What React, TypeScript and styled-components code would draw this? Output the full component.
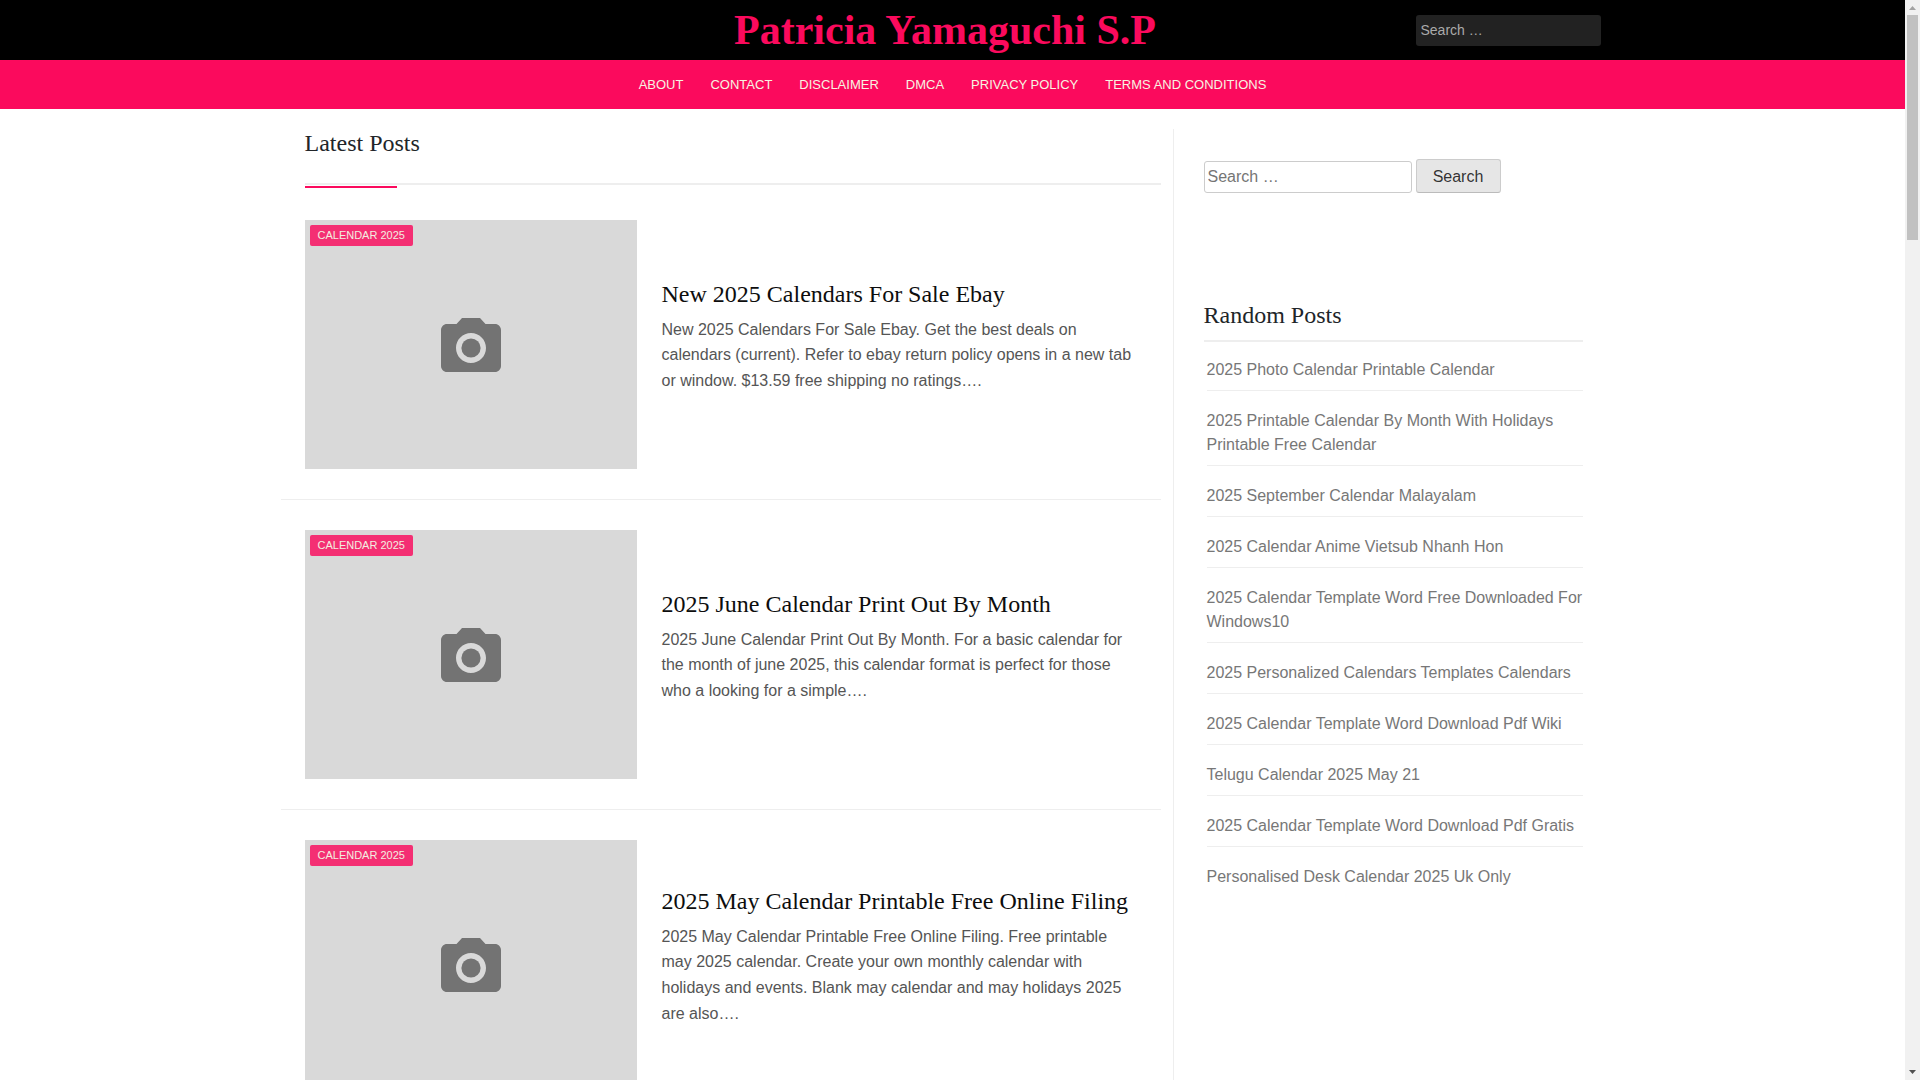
import React from "react";
import styled, { createGlobalStyle } from "styled-components";

const pink = "#fb0a5d";
const ivory = "#f8f3e1";
const rule = "#eeeeee";
const sans = '"Liberation Sans", Arial, Helvetica, sans-serif';
const serif = '"Liberation Serif", "Times New Roman", Times, serif';

const GlobalStyle = createGlobalStyle`
  *, *::before, *::after { box-sizing: border-box; }
  body {
    margin: 0;
    background: #fff;
    color: #212529;
    font: 16px/1.5 ${sans};
  }
  a { color: inherit; text-decoration: none; }
  h1, h2, h3, p, ul { margin: 0; padding: 0; font-weight: 400; }
  ul { list-style: none; }
`;

const Viewport = styled.div`
  display: flex;
  height: 100vh;
`;

const Page = styled.div`
  flex: 1;
  min-width: 0;
  overflow-y: auto;
  scrollbar-width: none;
`;

const Container = styled.div`
  max-width: 1344px;
  margin: 0 auto;
`;

const Header = styled.header`
  background: #000;
`;

const HeaderInner = styled(Container)`
  display: grid;
  grid-template-columns: 170px 1fr 185px;
  align-items: center;
  min-height: 60px;
  padding: 0 24px;
`;

const SiteTitle = styled.h1`
  grid-column: 2;
  color: ${pink};
  font: 700 42px/60px ${serif};
  text-align: center;
`;

const HeaderSearch = styled.input`
  width: 100%;
  height: 31px;
  padding: 0 5px;
  border: 0;
  border-radius: 3px;
  background: #222;
  color: #aaa;
  font: 14px ${sans};
  &::placeholder { color: #aaa; opacity: 1; }
`;

const Nav = styled.nav`
  background: ${pink};
`;

const NavList = styled.ul`
  display: flex;
  justify-content: center;
  gap: 27px;
`;

const NavLink = styled.a`
  display: block;
  color: ${ivory};
  font-size: 13px;
  line-height: 49px;
  text-transform: uppercase;
`;

const Content = styled(Container)`
  display: grid;
  grid-template-columns: minmax(0, 880fr) minmax(0, 452fr);
  gap: 12px;
  padding-top: 20px;
`;

const SectionTitle = styled.h2`
  position: relative;
  margin: 0 0 5px 24px;
  padding-bottom: 25px;
  border-bottom: 2px solid ${rule};
  font: 24px/29px ${serif};
  &::after {
    content: "";
    position: absolute;
    left: 0;
    bottom: -5px;
    width: 92px;
    height: 2px;
    background: ${pink};
  }
`;

const Post = styled.article`
  display: flex;
  align-items: center;
  gap: 25px;
  padding: 30px 24px;
  border-bottom: 1px solid ${rule};
`;

const Thumb = styled.div`
  position: relative;
  display: flex;
  flex: none;
  align-items: center;
  justify-content: center;
  width: 332px;
  height: 249px;
  background: #d9d9d9;
`;

const Badge = styled.a`
  position: absolute;
  top: 5px;
  left: 5px;
  padding: 0 8px;
  border-radius: 2px;
  background: ${pink};
  color: ${ivory};
  font-size: 11px;
  line-height: 21px;
  text-transform: uppercase;
  opacity: 0.82;
`;

const PostBody = styled.div`
  flex: 1;
  min-width: 0;
  padding-bottom: 16px;
`;

const PostTitle = styled.h3`
  margin-bottom: 8px;
  color: #0d0d0d;
  font: 24px/29px ${serif};
`;

const Excerpt = styled.p`
  color: #555;
  line-height: 1.6;
`;

const Sidebar = styled.aside`
  padding: 30px 42px 0 30px;
  border-left: 1px solid ${rule};
`;

const SearchForm = styled.form`
  display: flex;
  align-items: flex-end;
  gap: 4px;
  margin-bottom: 108px;
`;

const SearchField = styled.input`
  width: 208px;
  height: 32px;
  padding: 0 3px;
  border: 1px solid #ccc;
  border-radius: 3px;
  background: #fff;
  color: #666;
  font: 16px ${sans};
  &::placeholder { color: #757575; opacity: 1; }
`;

const SearchButton = styled.button`
  width: 85px;
  height: 34px;
  padding: 1px 0 0;
  border: 1px solid;
  border-color: #ccc #ccc #bbb;
  border-radius: 3px;
  background: #e6e6e6;
  color: rgba(0, 0, 0, 0.8);
  font: 16px ${sans};
`;

const WidgetTitle = styled.h2`
  padding-bottom: 10px;
  border-bottom: 2px solid ${rule};
  font: 24px/29px ${serif};
`;

const LinkList = styled.ul`
  display: grid;
  gap: 18px;
  margin: 16px 0 0 3px;
`;

const LinkItem = styled.li`
  padding-bottom: 8px;
  border-bottom: 1px solid ${rule};
  color: #777;
  line-height: 24px;
  &:last-child { border-bottom: 0; }
`;

const ScrollBar = styled.div`
  display: flex;
  flex: none;
  flex-direction: column;
  align-items: center;
  justify-content: space-between;
  width: 15px;
  background: #f1f1f1;
`;

const ScrollTop = styled.div`
  display: flex;
  flex-direction: column;
  align-items: center;
`;

const ScrollThumb = styled.div`
  width: 11px;
  height: 225px;
  background: #c1c1c1;
`;

const Arrow = styled.svg`
  display: block;
  width: 15px;
  height: 15px;
`;

const navItems = ["About", "Contact", "Disclaimer", "DMCA", "Privacy Policy", "Terms and Conditions"];

const posts = [
  {
    title: "New 2025 Calendars For Sale Ebay",
    excerpt:
      "New 2025 Calendars For Sale Ebay. Get the best deals on calendars (current). Refer to ebay return policy opens in a new tab or window. $13.59 free shipping no ratings….",
  },
  {
    title: "2025 June Calendar Print Out By Month",
    excerpt:
      "2025 June Calendar Print Out By Month. For a basic calendar for the month of june 2025, this calendar format is perfect for those who a looking for a simple….",
  },
  {
    title: "2025 May Calendar Printable Free Online Filing",
    excerpt:
      "2025 May Calendar Printable Free Online Filing. Free printable may 2025 calendar. Create your own monthly calendar with holidays and events. Blank may calendar and may holidays 2025 are also….",
  },
];

const randomPosts = [
  "2025 Photo Calendar Printable Calendar",
  "2025 Printable Calendar By Month With Holidays Printable Free Calendar",
  "2025 September Calendar Malayalam",
  "2025 Calendar Anime Vietsub Nhanh Hon",
  "2025 Calendar Template Word Free Downloaded For Windows10",
  "2025 Personalized Calendars Templates Calendars",
  "2025 Calendar Template Word Download Pdf Wiki",
  "Telugu Calendar 2025 May 21",
  "2025 Calendar Template Word Download Pdf Gratis",
  "Personalised Desk Calendar 2025 Uk Only",
];

function CameraIcon() {
  return (
    <svg width="60" height="54" viewBox="2 2 20 18" fill="#737373" aria-hidden="true">
      <circle cx="12" cy="12" r="3.2" />
      <path d="M9 2L7.17 4H4c-1.1 0-2 .9-2 2v12c0 1.1.9 2 2 2h16c1.1 0 2-.9 2-2V6c0-1.1-.9-2-2-2h-3.17L15 2H9zm3 15c-2.76 0-5-2.24-5-5s2.24-5 5-5 5 2.24 5 5-2.24 5-5 5z" />
    </svg>
  );
}

export default function App() {
  return (
    <Viewport>
      <GlobalStyle />
      <Page>
        <Header>
          <HeaderInner>
            <SiteTitle>
              <a href="#home">Patricia Yamaguchi S.P</a>
            </SiteTitle>
            <HeaderSearch type="search" placeholder="Search …" aria-label="Search the site" />
          </HeaderInner>
        </Header>
        <Nav>
          <NavList>
            {navItems.map((item) => (
              <li key={item}>
                <NavLink href="#page">{item}</NavLink>
              </li>
            ))}
          </NavList>
        </Nav>
        <Content>
          <main>
            <SectionTitle>Latest Posts</SectionTitle>
            {posts.map((post) => (
              <Post key={post.title}>
                <Thumb>
                  <CameraIcon />
                  <Badge href="#category">Calendar 2025</Badge>
                </Thumb>
                <PostBody>
                  <PostTitle>
                    <a href="#post">{post.title}</a>
                  </PostTitle>
                  <Excerpt>{post.excerpt}</Excerpt>
                </PostBody>
              </Post>
            ))}
          </main>
          <Sidebar>
            <SearchForm>
              <SearchField type="search" placeholder="Search …" aria-label="Search for" />
              <SearchButton type="submit">Search</SearchButton>
            </SearchForm>
            <WidgetTitle>Random Posts</WidgetTitle>
            <LinkList>
              {randomPosts.map((title) => (
                <LinkItem key={title}>
                  <a href="#post">{title}</a>
                </LinkItem>
              ))}
            </LinkList>
          </Sidebar>
        </Content>
      </Page>
      <ScrollBar aria-hidden="true">
        <ScrollTop>
          <Arrow viewBox="0 0 15 15" fill="#a3a3a3">
            <path d="M4 10L7.5 6L11 10z" />
          </Arrow>
          <ScrollThumb />
        </ScrollTop>
        <Arrow viewBox="0 0 15 15" fill="#505050">
          <path d="M4 5L7.5 9L11 5z" />
        </Arrow>
      </ScrollBar>
    </Viewport>
  );
}
